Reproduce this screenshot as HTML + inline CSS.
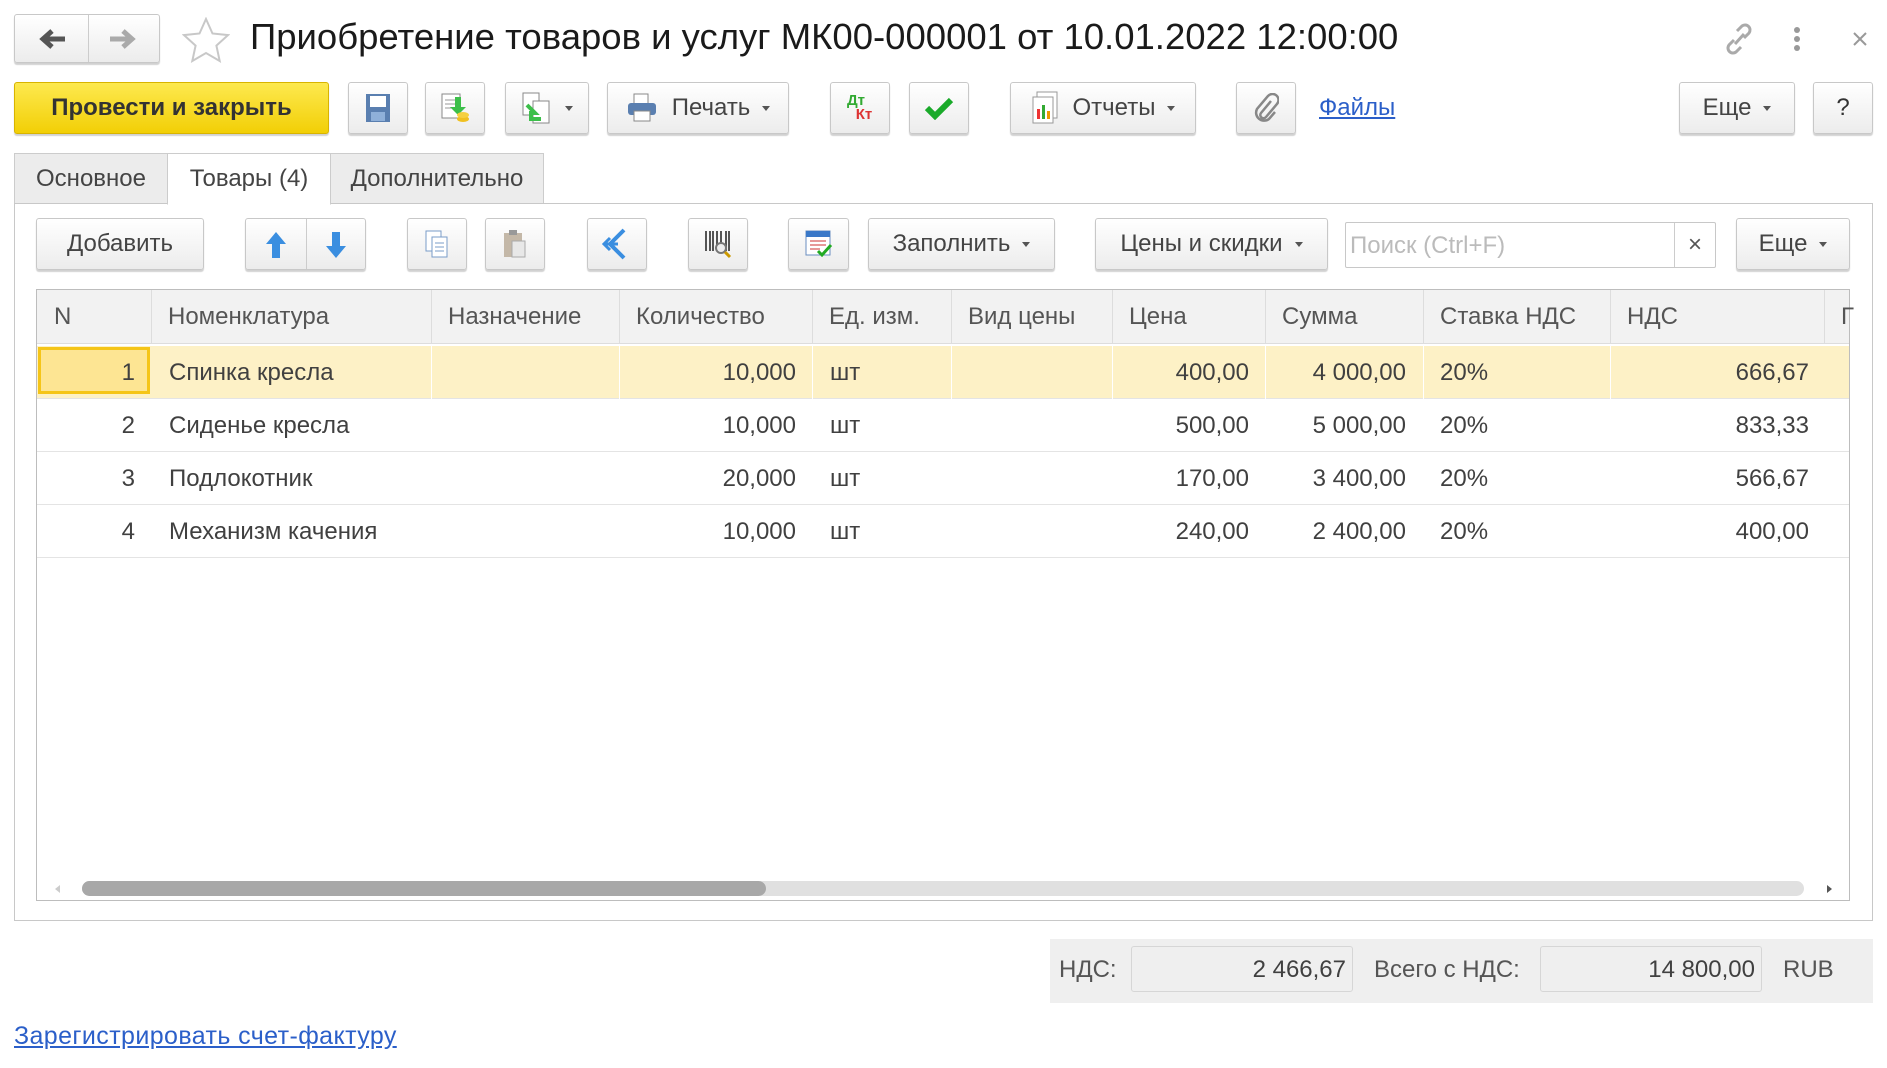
<!DOCTYPE html>
<html><head><meta charset="utf-8"><style>
*{box-sizing:border-box;margin:0;padding:0}
body{width:1887px;height:1068px;background:#fff;font-family:"Liberation Sans",Arial,sans-serif;color:#404040;position:relative;overflow:hidden;font-size:24px}
.a{position:absolute}
.btn{position:absolute;background:linear-gradient(#fff,#ececec);border:1px solid #c8c8c8;border-radius:3px;box-shadow:0 2px 1px rgba(0,0,0,.18);display:flex;align-items:center;justify-content:center;color:#444;font-size:24px;white-space:nowrap}
.dd{display:inline-block;width:0;height:0;border-left:4px solid transparent;border-right:4px solid transparent;border-top:5px solid #555;margin-left:12px}
.tab{position:absolute;top:153px;height:51px;border:1px solid #ccc;background:#ececec;display:flex;align-items:center;justify-content:center;font-size:24px;color:#444}
.hd{position:absolute;top:290px;height:54px;line-height:54px;color:#555;font-size:24px;padding-left:17px}
.vl{position:absolute;top:290px;width:1px;height:54px;background:#ddd}
.row{position:absolute;left:37px;width:1812px;height:53px;border-bottom:1px solid #e4e4e4}
.c{position:absolute;line-height:53px;font-size:24px;color:#404040;white-space:nowrap}
.r{text-align:right}
</style></head><body>

<div class="btn" style="left:14px;top:14px;width:146px;height:49px;padding:0">
<div style="position:absolute;left:73px;top:0;width:1px;height:47px;background:#ccc"></div>
<svg class="a" style="left:22px;top:12px" width="30" height="24" viewBox="0 0 30 24"><path d="M28 12H8M15 4l-9 8 9 8" stroke="#555" stroke-width="5" fill="none"/></svg>
<svg class="a" style="left:93px;top:12px" width="30" height="24" viewBox="0 0 30 24"><path d="M2 12h20M15 4l9 8-9 8" stroke="#aaa" stroke-width="5" fill="none"/></svg>
</div>
<svg class="a" style="left:182px;top:17px" width="48" height="46" viewBox="0 0 48 46"><path d="M24 2l6.5 14.5 15.5 1.6-11.6 10.5 3.3 15.4L24 36l-13.7 8 3.3-15.4L2 18.1l15.5-1.6z" fill="none" stroke="#c8c8c8" stroke-width="2"/></svg>
<div class="a" style="left:250px;top:16px;font-size:36.5px;color:#1a1a1a;white-space:nowrap">Приобретение товаров и услуг МК00-000001 от 10.01.2022 12:00:00</div>
<svg class="a" style="left:1724px;top:22px" width="30" height="34" viewBox="0 0 30 34"><g fill="none" stroke="#aaa" stroke-width="3"><path d="M13 9l5-5a5 5 0 0 1 7 7l-5 5"/><path d="M17 25l-5 5a5 5 0 0 1-7-7l5-5"/><path d="M11 22l9-10"/></g></svg>
<svg class="a" style="left:1792px;top:26px" width="10" height="26"><circle cx="5" cy="4" r="3" fill="#999"/><circle cx="5" cy="13" r="3" fill="#999"/><circle cx="5" cy="22" r="3" fill="#999"/></svg>
<svg class="a" style="left:1852px;top:31px" width="16" height="16"><path d="M2 2l12 12M14 2L2 14" stroke="#999" stroke-width="2"/></svg>

<div class="btn" style="left:14px;top:82px;width:315px;height:52px;background:linear-gradient(#fde94f,#f2cf06);border-color:#d8b400;font-weight:bold;color:#333;font-size:24px">Провести и закрыть</div>
<div class="btn" style="left:348px;top:82px;width:60px;height:52px"><svg width="26" height="30"><rect x="1" y="1" width="24" height="28" fill="#5a7fb0"/><rect x="5" y="3" width="16" height="11" fill="#fff"/><rect x="6" y="19" width="14" height="9" fill="#8fb0d9"/></svg></div>
<div class="btn" style="left:425px;top:82px;width:60px;height:52px"><svg width="32" height="34"><rect x="3" y="3" width="18" height="24" fill="#fff" stroke="#888"/><path d="M6 9h12M6 13h12M6 17h8" stroke="#999"/><path d="M22 6v10h5l-8 8-8-8h5V6z" fill="#3cbf4a"/><ellipse cx="24" cy="28" rx="6" ry="3" fill="#f0c020"/><ellipse cx="24" cy="24" rx="6" ry="3" fill="#f5d040"/></svg></div>
<div class="btn" style="left:505px;top:82px;width:84px;height:52px"><svg width="32" height="34"><rect x="2" y="2" width="16" height="22" fill="#fff" stroke="#888"/><rect x="12" y="10" width="16" height="22" fill="#fff" stroke="#888"/><path d="M6 14l8 8h-4v6h10" stroke="#3cbf4a" stroke-width="4" fill="none"/></svg><span class="dd"></span></div>
<div class="btn" style="left:607px;top:82px;width:182px;height:52px"><svg width="32" height="30"><rect x="8" y="1" width="14" height="10" fill="#fff" stroke="#888"/><rect x="2" y="10" width="28" height="12" rx="3" fill="#5a7fb0"/><rect x="8" y="18" width="16" height="10" fill="#fff" stroke="#888"/></svg><span style="margin-left:14px">Печать</span><span class="dd"></span></div>
<div class="btn" style="left:830px;top:82px;width:60px;height:52px;flex-direction:column;line-height:14px;font-size:15px;font-weight:bold"><span style="color:#3a3;margin-left:-8px">Дт</span><span style="color:#d33;margin-left:8px">Кт</span></div>
<div class="btn" style="left:909px;top:82px;width:60px;height:52px"><svg width="30" height="24"><path d="M3 12l8 8L27 4" stroke="#1aaa2a" stroke-width="6" fill="none"/></svg></div>
<div class="btn" style="left:1010px;top:82px;width:186px;height:52px"><svg width="30" height="34"><rect x="6" y="1" width="20" height="26" fill="#fff" stroke="#999"/><rect x="2" y="6" width="20" height="26" fill="#fff" stroke="#999"/><rect x="6" y="18" width="3" height="10" fill="#e33"/><rect x="11" y="14" width="3" height="14" fill="#3a3"/><rect x="16" y="20" width="3" height="8" fill="#e90"/></svg><span style="margin-left:12px">Отчеты</span><span class="dd"></span></div>
<div class="btn" style="left:1236px;top:82px;width:60px;height:52px"><svg width="26" height="30"><path d="M18 8L8 20a3 3 0 0 0 5 4l11-13a6 6 0 0 0-9-8L4 16a8 8 0 0 0 12 10l6-7" stroke="#888" stroke-width="2.5" fill="none"/></svg></div>
<div class="a" style="left:1319px;top:94px;font-size:24px;color:#2b5fc9;text-decoration:underline">Файлы</div>
<div class="btn" style="left:1679px;top:82px;width:116px;height:52px">Еще<span class="dd"></span></div>
<div class="btn" style="left:1813px;top:82px;width:60px;height:52px;color:#333">?</div>

<div class="tab" style="left:14px;width:154px">Основное</div>
<div class="tab" style="left:167px;width:164px;background:#fff;border-bottom-color:#fff;z-index:2;height:52px">Товары (4)</div>
<div class="tab" style="left:330px;width:214px">Дополнительно</div>
<div class="a" style="left:14px;top:203px;width:1859px;height:718px;border:1px solid #c8c8c8;background:#fff"></div>

<div class="btn" style="left:36px;top:218px;width:168px;height:52px">Добавить</div>
<div class="btn" style="left:245px;top:218px;width:121px;height:52px"><div style="position:absolute;left:60px;top:0;width:1px;height:50px;background:#ccc"></div>
<svg class="a" style="left:17px;top:11px" width="26" height="30"><path d="M13 2L3 14h6v14h8V14h6z" fill="#3a8ee0"/></svg>
<svg class="a" style="left:77px;top:11px" width="26" height="30"><path d="M13 28L3 16h6V2h8v14h6z" fill="#3a8ee0"/></svg></div>
<div class="btn" style="left:407px;top:218px;width:60px;height:52px"><svg width="26" height="30"><rect x="2" y="2" width="15" height="20" fill="#fff" stroke="#7a9cc8"/><rect x="8" y="8" width="15" height="20" fill="#fff" stroke="#7a9cc8"/><path d="M11 14h9M11 18h9M11 22h9" stroke="#7a9cc8"/></svg></div>
<div class="btn" style="left:485px;top:218px;width:60px;height:52px"><svg width="26" height="30"><rect x="2" y="4" width="18" height="24" fill="#c4b8a8"/><rect x="7" y="1" width="8" height="5" fill="#999"/><rect x="10" y="12" width="13" height="16" fill="#e8e8e8" stroke="#aaa"/></svg></div>
<div class="btn" style="left:587px;top:218px;width:60px;height:52px"><svg width="34" height="34"><path d="M24 3L10 17l14 14" stroke="#3a8ee0" stroke-width="4" fill="none"/><path d="M4 17h14M10 11l-6 6 6 6" stroke="#3a8ee0" stroke-width="3" fill="none"/></svg></div>
<div class="btn" style="left:688px;top:218px;width:60px;height:52px"><svg width="30" height="32"><path d="M3 3v20M7 3v20M10 3v20M14 3v20M18 3v20M23 3v20M26 3v20" stroke="#555" stroke-width="2"/><circle cx="18" cy="20" r="5" fill="#eee" stroke="#777" stroke-width="2"/><path d="M22 24l5 5" stroke="#c90" stroke-width="3"/></svg></div>
<div class="btn" style="left:788px;top:218px;width:61px;height:52px"><svg width="30" height="30"><rect x="2" y="2" width="24" height="24" fill="#fff" stroke="#6a8ec0"/><rect x="2" y="2" width="24" height="6" fill="#3a78c8"/><path d="M6 12h16M6 16h16M6 20h10" stroke="#c33"/><path d="M14 22l4 4 9-10" stroke="#2a2" stroke-width="3" fill="none"/></svg></div>
<div class="btn" style="left:868px;top:218px;width:187px;height:52px">Заполнить<span class="dd"></span></div>
<div class="btn" style="left:1095px;top:218px;width:233px;height:52px">Цены и скидки<span class="dd"></span></div>
<div class="a" style="left:1345px;top:222px;width:371px;height:46px;border:1px solid #c8c8c8;border-radius:2px;background:#fff">
<span class="a" style="left:4px;top:9px;color:#bbb">Поиск (Ctrl+F)</span>
<div class="a" style="left:328px;top:0;width:1px;height:44px;background:#ccc"></div>
<span class="a" style="left:342px;top:8px;color:#555">×</span></div>
<div class="btn" style="left:1736px;top:218px;width:114px;height:52px">Еще<span class="dd"></span></div>

<div class="a" style="left:36px;top:289px;width:1814px;height:612px;border:1px solid #bdbdbd"></div>
<div class="a" style="left:37px;top:290px;width:1812px;height:54px;background:#f2f2f2;border-bottom:1px solid #ddd"></div>
<div class="hd" style="left:37px">N</div>
<div class="hd" style="left:151px">Номенклатура</div>
<div class="hd" style="left:431px">Назначение</div>
<div class="hd" style="left:619px">Количество</div>
<div class="hd" style="left:812px">Ед. изм.</div>
<div class="hd" style="left:951px">Вид цены</div>
<div class="hd" style="left:1112px">Цена</div>
<div class="hd" style="left:1265px">Сумма</div>
<div class="hd" style="left:1423px">Ставка НДС</div>
<div class="hd" style="left:1610px">НДС</div>
<div class="hd" style="left:1824px">Г</div>
<div class="vl" style="left:151px"></div><div class="vl" style="left:431px"></div><div class="vl" style="left:619px"></div><div class="vl" style="left:812px"></div><div class="vl" style="left:951px"></div><div class="vl" style="left:1112px"></div><div class="vl" style="left:1265px"></div><div class="vl" style="left:1423px"></div><div class="vl" style="left:1610px"></div><div class="vl" style="left:1824px"></div>

<div class="row" style="top:346px;background:#fdf1c6">
<div class="a" style="left:1px;top:1px;width:112px;height:47px;background:#fde593;border:3px solid #f5c518"></div>
<div class="a" style="left:394px;top:0;width:1px;height:53px;background:#fff"></div><div class="a" style="left:582px;top:0;width:1px;height:53px;background:#fff"></div><div class="a" style="left:775px;top:0;width:1px;height:53px;background:#fff"></div><div class="a" style="left:914px;top:0;width:1px;height:53px;background:#fff"></div><div class="a" style="left:1075px;top:0;width:1px;height:53px;background:#fff"></div><div class="a" style="left:1228px;top:0;width:1px;height:53px;background:#fff"></div><div class="a" style="left:1386px;top:0;width:1px;height:53px;background:#fff"></div><div class="a" style="left:1573px;top:0;width:1px;height:53px;background:#fff"></div>
</div>
<div class="row" style="top:399px"></div>
<div class="row" style="top:452px"></div>
<div class="row" style="top:505px"></div>

<div class="c r" style="left:37px;width:98px;top:346px">1</div><div class="c" style="left:169px;top:346px">Спинка кресла</div><div class="c r" style="left:619px;width:177px;top:346px">10,000</div><div class="c" style="left:830px;top:346px">шт</div><div class="c r" style="left:1112px;width:137px;top:346px">400,00</div><div class="c r" style="left:1265px;width:141px;top:346px">4 000,00</div><div class="c" style="left:1440px;top:346px">20%</div><div class="c r" style="left:1610px;width:199px;top:346px">666,67</div>
<div class="c r" style="left:37px;width:98px;top:399px">2</div><div class="c" style="left:169px;top:399px">Сиденье кресла</div><div class="c r" style="left:619px;width:177px;top:399px">10,000</div><div class="c" style="left:830px;top:399px">шт</div><div class="c r" style="left:1112px;width:137px;top:399px">500,00</div><div class="c r" style="left:1265px;width:141px;top:399px">5 000,00</div><div class="c" style="left:1440px;top:399px">20%</div><div class="c r" style="left:1610px;width:199px;top:399px">833,33</div>
<div class="c r" style="left:37px;width:98px;top:452px">3</div><div class="c" style="left:169px;top:452px">Подлокотник</div><div class="c r" style="left:619px;width:177px;top:452px">20,000</div><div class="c" style="left:830px;top:452px">шт</div><div class="c r" style="left:1112px;width:137px;top:452px">170,00</div><div class="c r" style="left:1265px;width:141px;top:452px">3 400,00</div><div class="c" style="left:1440px;top:452px">20%</div><div class="c r" style="left:1610px;width:199px;top:452px">566,67</div>
<div class="c r" style="left:37px;width:98px;top:505px">4</div><div class="c" style="left:169px;top:505px">Механизм качения</div><div class="c r" style="left:619px;width:177px;top:505px">10,000</div><div class="c" style="left:830px;top:505px">шт</div><div class="c r" style="left:1112px;width:137px;top:505px">240,00</div><div class="c r" style="left:1265px;width:141px;top:505px">2 400,00</div><div class="c" style="left:1440px;top:505px">20%</div><div class="c r" style="left:1610px;width:199px;top:505px">400,00</div>

<div class="a" style="left:82px;top:881px;width:1722px;height:15px;border-radius:8px;background:#e0e0e0"></div>
<div class="a" style="left:82px;top:881px;width:684px;height:15px;border-radius:8px;background:#a8a8a8"></div>
<div class="a" style="left:55px;top:885px;width:0;height:0;border-top:4px solid transparent;border-bottom:4px solid transparent;border-right:5px solid #ccc"></div>
<div class="a" style="left:1827px;top:885px;width:0;height:0;border-top:4px solid transparent;border-bottom:4px solid transparent;border-left:5px solid #555"></div>

<div class="a" style="left:1050px;top:939px;width:823px;height:64px;background:#efefef"></div>
<div class="a" style="left:1059px;top:956px;color:#555">НДС:</div>
<div class="a" style="left:1131px;top:946px;width:222px;height:46px;border:1px solid #d6d6d6;border-radius:3px;background:#efefef;text-align:right;padding:9px 6px 0 0;color:#404040">2 466,67</div>
<div class="a" style="left:1374px;top:956px;color:#555">Всего с НДС:</div>
<div class="a" style="left:1540px;top:946px;width:222px;height:46px;border:1px solid #d6d6d6;border-radius:3px;background:#efefef;text-align:right;padding:9px 6px 0 0;color:#404040">14 800,00</div>
<div class="a" style="left:1783px;top:956px;color:#555">RUB</div>

<div class="a" style="left:14px;top:1022px;color:#2b5fc9;text-decoration:underline;font-size:25px;letter-spacing:0.4px">Зарегистрировать счет-фактуру</div>
</body></html>
